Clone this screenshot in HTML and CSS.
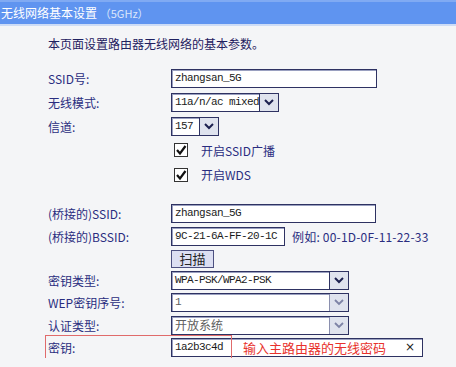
FILE: index.html
```html
<!DOCTYPE html>
<html lang="zh-CN">
<head>
  <meta charset="UTF-8">
  <title>无线网络基本设置</title>
  <link rel="stylesheet" href="styles.css">
</head>
<body>
  <div class="titlebar">无线网络基本设置 <span class="band">（5GHz）</span></div>
  <div class="page">
    <p class="desc">本页面设置路由器无线网络的基本参数。</p>

    <div class="row h24">
      <span class="label">SSID号:</span>
      <div class="box w206">zhangsan_5G</div>
    </div>
    <div class="row h24">
      <span class="label">无线模式:</span>
      <div class="box select w108"><span class="val">11a/n/ac mixed</span><span class="arrow"><svg width="10" height="7" viewBox="0 0 10 7"><polyline points="1,1 5,5 9,1" fill="none" stroke="#1c2150" stroke-width="2"/></svg></span></div>
    </div>
    <div class="row h24">
      <span class="label">信道:</span>
      <div class="box select w48"><span class="val">157</span><span class="arrow"><svg width="10" height="7" viewBox="0 0 10 7"><polyline points="1,1 5,5 9,1" fill="none" stroke="#1c2150" stroke-width="2"/></svg></span></div>
    </div>
    <div class="row h24 check-row">
      <svg class="check" width="14" height="14" viewBox="0 0 14 14"><rect x="0.5" y="0.5" width="13" height="13" fill="#fff" stroke="#333"/><polyline points="3,7 6,10.5 11.5,3" fill="none" stroke="#111" stroke-width="2.2"/></svg>
      <span class="check-text">开启SSID广播</span>
    </div>
    <div class="row h25 check-row">
      <svg class="check" width="14" height="14" viewBox="0 0 14 14"><rect x="0.5" y="0.5" width="13" height="13" fill="#fff" stroke="#333"/><polyline points="3,7 6,10.5 11.5,3" fill="none" stroke="#111" stroke-width="2.2"/></svg>
      <span class="check-text">开启WDS</span>
    </div>

    <div class="spacer"></div>

    <div class="row h24">
      <span class="label">(桥接的)SSID:</span>
      <div class="box w205">zhangsan_5G</div>
    </div>
    <div class="row h23">
      <span class="label">(桥接的)BSSID:</span>
      <div class="box w114">9C-21-6A-FF-20-1C</div>
      <span class="example">例如: 00-1D-0F-11-22-33</span>
    </div>
    <div class="row h21">
      <span class="label"></span>
      <button class="scan">扫描</button>
    </div>
    <div class="row h22">
      <span class="label">密钥类型:</span>
      <div class="box select w178"><span class="val">WPA-PSK/WPA2-PSK</span><span class="arrow"><svg width="10" height="7" viewBox="0 0 10 7"><polyline points="1,1 5,5 9,1" fill="none" stroke="#1c2150" stroke-width="2"/></svg></span></div>
    </div>
    <div class="row h23">
      <span class="label">WEP密钥序号:</span>
      <div class="box select disabled w178"><span class="val">1</span><span class="arrow"><svg width="10" height="7" viewBox="0 0 10 7"><polyline points="1,1 5,5 9,1" fill="none" stroke="#7d83a6" stroke-width="1.8"/></svg></span></div>
    </div>
    <div class="row h23">
      <span class="label">认证类型:</span>
      <div class="box select disabled w178"><span class="val cjk">开放系统</span><span class="arrow"><svg width="10" height="7" viewBox="0 0 10 7"><polyline points="1,1 5,5 9,1" fill="none" stroke="#7d83a6" stroke-width="1.8"/></svg></span></div>
    </div>
    <div class="row h21 key-row">
      <span class="label">密钥:</span>
      <div class="box w252 key-box">
        <span class="key-val">1a2b3c4d</span>
        <span class="hint">输入主路由器的无线密码</span>
        <span class="clear">×</span>
      </div>
      <div class="highlight"></div>
    </div>
  </div>
</body>
</html>
```

FILE: styles.css
```css
body {
  margin: 0;
  background-color: #f4f5f7;
  font-family: "Noto Sans CJK SC", "Liberation Sans", sans-serif;
  font-size: 12px;
  color: #25286e;
}
.titlebar {
  height: 22px;
  line-height: 22px;
  background-color: #5f94f0;
  border-top: 2px solid #80aaf3;
  border-bottom: 2px solid #cddcf6;
  color: #fff;
  padding-left: 1px;
  font-size: 12px;
}
.titlebar .band {
  color: #dbe6fb;
  font-size: 11px;
}
.page {
  padding-left: 48px;
}
.desc {
  margin: 0;
  height: 40px;
  line-height: 36px;
  color: #1f2160;
}
.row {
  position: relative;
  display: flex;
  align-items: center;
}
.h21 { height: 21px; }
.h22 { height: 22px; }
.h23 { height: 23px; }
.h24 { height: 24px; }
.h25 { height: 25px; }
.spacer {
  height: 14px;
}
.label {
  width: 123px;
  flex-shrink: 0;
  color: #2a2d80;
}
.box {
  box-sizing: border-box;
  height: 19px;
  border: 1px solid #2e3262;
  box-shadow: inset 1px 1px 0 #9aa0c0;
  background-color: #fff;
  font-family: "Liberation Mono", monospace;
  font-size: 11px;
  letter-spacing: -0.6px;
  color: #1b1b1b;
  padding-left: 3px;
  line-height: 17px;
  white-space: nowrap;
}
.w48 { width: 48px; }
.w108 { width: 108px; }
.w114 { width: 114px; }
.w178 { width: 178px; }
.w205 { width: 205px; }
.w206 { width: 206px; }
.w252 { width: 252px; }
.select {
  display: flex;
  padding-left: 0;
}
.select .val {
  flex: 1;
  padding-left: 3px;
  overflow: hidden;
}
.select .arrow {
  width: 18px;
  border-left: 1px solid #2e3262;
  background-color: #dfe3ee;
  display: flex;
  align-items: center;
  justify-content: center;
}
.disabled .val {
  color: #606060;
}
.disabled .arrow {
  border-left-color: #8a8fae;
}
.val.cjk {
  font-family: "Noto Sans CJK SC", sans-serif;
  font-size: 12px;
  letter-spacing: 0;
  line-height: 16px;
}
.check-row {
  padding-left: 126px;
}
.check {
  flex-shrink: 0;
}
.check-text {
  margin-left: 13px;
  color: #2a2d80;
}
.example {
  margin-left: 7px;
  color: #2a2d80;
  letter-spacing: 0.2px;
}
.scan {
  box-sizing: border-box;
  height: 18px;
  width: 43px;
  padding: 0;
  margin: 0;
  border: 1px solid #4c5080;
  background-color: #dcdff2;
  font-family: "Noto Sans CJK SC", sans-serif;
  font-size: 13px;
  line-height: 16px;
  color: #222;
}
.key-box {
  display: flex;
  align-items: center;
}
.key-val {
  width: 68px;
  flex-shrink: 0;
}
.hint {
  font-family: "Noto Sans CJK SC", sans-serif;
  font-size: 13px;
  letter-spacing: 0;
  color: #e8322c;
  flex: 1;
}
.clear {
  font-family: "DejaVu Sans", sans-serif;
  font-size: 12px;
  letter-spacing: 0;
  color: #222;
  margin-right: 7px;
}
.highlight {
  position: absolute;
  left: -3px;
  top: -2px;
  width: 187px;
  height: 24px;
  box-sizing: border-box;
  border: 1px solid #e06b6b;
  pointer-events: none;
}
```
